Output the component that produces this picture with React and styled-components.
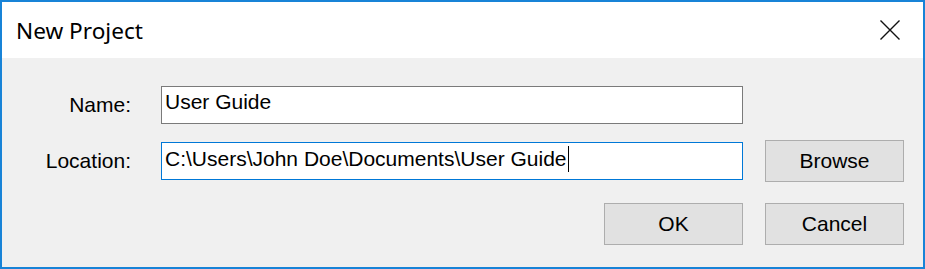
import React from 'react';
import styled, { createGlobalStyle } from 'styled-components';

const GlobalStyle = createGlobalStyle`
  html, body {
    margin: 0;
    padding: 0;
    background: #ffffff;
  }
  * { box-sizing: border-box; }
`;

const Window = styled.div`
  width: 925px;
  height: 269px;
  border: 2px solid #1883d7;
  display: flex;
  flex-direction: column;
  background: #f0f0f0;
  overflow: hidden;
`;

const TitleBar = styled.div`
  height: 56px;
  flex: none;
  display: flex;
  align-items: center;
  justify-content: space-between;
  padding: 0 23px 0 14px;
  background: #ffffff;
`;

const Title = styled.div`
  font-family: "Noto Sans", "Open Sans", sans-serif;
  font-size: 22.6px;
  color: #000;
`;

const CloseButton = styled.div`
  width: 20px;
  height: 20px;
  display: flex;
`;

const Body = styled.div`
  flex: 1;
  display: grid;
  grid-template-columns: 159px 582px 1fr;
  grid-template-rows: 38px 42px 42px;
  row-gap: 16px;
  padding: 28px 19px 0 0;
  font-family: "Liberation Sans", Arial, sans-serif;
  font-size: 21px;
  color: #000;
`;

const Label = styled.div`
  grid-row: ${p => p.$row};
  grid-column: 1;
  text-align: right;
  align-self: center;
  padding-right: 30px;
  line-height: 24px;
`;

const TextField = styled.div`
  grid-row: ${p => p.$row};
  grid-column: 2;
  height: 38px;
  align-self: center;
  border: 1px solid ${p => (p.$focused ? '#0078d7' : '#7a7a7a')};
  background: #ffffff;
  padding: 3px 0 0 3px;
  line-height: 24px;
  white-space: nowrap;
`;

const Caret = styled.span`
  display: inline-block;
  width: 1px;
  height: 26px;
  background: #000;
  vertical-align: -6px;
  margin-left: 1px;
`;

const Button = styled.div`
  grid-row: ${p => p.$row};
  grid-column: ${p => p.$col};
  justify-self: end;
  margin-top: ${p => (p.$row === 3 ? '5px' : '0')};
  width: 139px;
  height: 42px;
  border: 1px solid #adadad;
  background: #e1e1e1;
  display: flex;
  align-items: center;
  justify-content: center;
  line-height: 24px;
`;

export default function App() {
  return (
    <>
      <GlobalStyle />
      <Window>
        <TitleBar>
          <Title>New Project</Title>
          <CloseButton>
            <svg width="20" height="20" viewBox="0 0 20 20">
              <path d="M0.5 0.5 L19.5 19.5 M19.5 0.5 L0.5 19.5" stroke="#111" strokeWidth="1.4" fill="none" />
            </svg>
          </CloseButton>
        </TitleBar>
        <Body>
          <Label $row={1}>Name:</Label>
          <TextField $row={1}>User Guide</TextField>
          <Label $row={2}>Location:</Label>
          <TextField $row={2} $focused>
            C:\Users\John Doe\Documents\User Guide<Caret />
          </TextField>
          <Button $row={2} $col={3}>Browse</Button>
          <Button $row={3} $col={2}>OK</Button>
          <Button $row={3} $col={3}>Cancel</Button>
        </Body>
      </Window>
    </>
  );
}
